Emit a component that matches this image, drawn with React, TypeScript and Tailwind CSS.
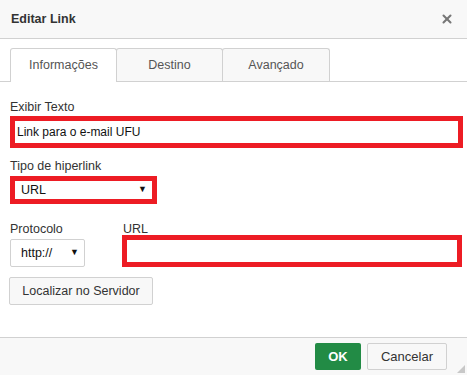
import { X } from 'lucide-react';

const App = () => {
  return (
    <div
      className="w-[467px] h-[375px] flex flex-col bg-white text-[12.5px] text-[#333] overflow-hidden"
      style={{ fontFamily: '"Liberation Sans", Arial, sans-serif' }}
    >
      {/* cabeçalho */}
      <header className="h-[39px] shrink-0 bg-[#f8f8f8] border-b border-[#d1d1d1] flex items-center justify-between pl-[11px] pr-[13px]">
        <h1 className="font-bold text-[12.5px] text-[#333]">Editar Link</h1>
        <X size={14} strokeWidth={3.5} className="text-[#777]" />
      </header>

      {/* abas */}
      <div className="flex pl-[10px] pt-[9px] border-b border-[#d1d1d1]">
        <div className="w-[107px] h-[34px] -mb-px bg-white border border-b-0 border-[#d1d1d1] rounded-t-[3px] flex items-center justify-center text-[#555]">
          Informações
        </div>
        <div className="w-[107px] h-[33px] -ml-px bg-[#f8f8f8] border border-b-0 border-[#d1d1d1] rounded-t-[3px] flex items-center justify-center text-[#555]">
          Destino
        </div>
        <div className="w-[108px] h-[33px] -ml-px bg-[#f8f8f8] border border-b-0 border-[#d1d1d1] rounded-t-[3px] flex items-center justify-center text-[#555]">
          Avançado
        </div>
      </div>

      {/* conteúdo */}
      <main className="flex-1 pl-[10px] pr-[4px] pt-[17px]">
        <label className="block leading-[16px]">Exibir Texto</label>
        <div className="mt-[1px] h-[32px] border-[5px] border-[#ed1c24] flex items-center pl-[2px] text-[12px] text-[#111]">
          Link para o e-mail UFU
        </div>

        <label className="block leading-[16px] mt-[10px]">Tipo de hiperlink</label>
        <div className="mt-[2px] w-[147px] h-[28px] border-[5px] border-[#ed1c24] flex items-center justify-between pl-[6px] pr-[5px] text-[#111]">
          <span>URL</span>
          <span className="text-[9px]">▼</span>
        </div>

        <div className="flex mt-[17px]">
          <div className="w-[112px]">
            <label className="block leading-[16px]">Protocolo</label>
            <div className="mt-[2px] w-[75px] h-[28px] border border-[#d1d1d1] rounded-[2px] flex items-center justify-between pl-[10px] pr-[5px] text-[#111]">
              <span>http://</span>
              <span className="text-[9px]">▼</span>
            </div>
          </div>
          <div className="flex-1">
            <label className="block leading-[16px] pl-[1px]">URL</label>
            <div className="mt-[-2px] mr-[1px] h-[32px] border-[5px] border-[#ed1c24]" />
          </div>
        </div>

        <button className="mt-[10px] -ml-px h-[28px] w-[144px] bg-[#f8f8f8] border border-[#d1d1d1] rounded-[2px] text-[#333]">
          Localizar no Servidor
        </button>
      </main>

      {/* rodapé */}
      <footer className="relative h-[38px] shrink-0 bg-[#f8f8f8] border-t border-[#d1d1d1] flex items-center justify-end gap-[6px] pr-[20px] text-[13px]">
        <button className="h-[27px] w-[46px] bg-[#228b45] rounded-[2px] text-white font-bold">OK</button>
        <button className="h-[27px] w-[80px] bg-[#f8f8f8] border border-[#d1d1d1] rounded-[2px] text-[#333]">
          Cancelar
        </button>
        <svg className="absolute right-[2px] bottom-[2px]" width="8" height="8" viewBox="0 0 8 8">
          <polygon points="8,0 8,8 0,8" fill="#c8c8c8" />
        </svg>
      </footer>
    </div>
  );
};

export default App;
